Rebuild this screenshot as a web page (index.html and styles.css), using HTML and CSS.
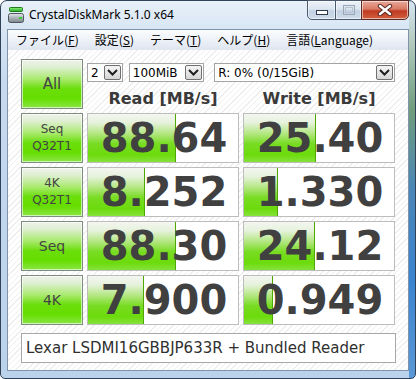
FILE: index.html
```html
<!DOCTYPE html>
<html>
<head>
<meta charset="utf-8">
<link rel="stylesheet" href="styles.css">
</head>
<body>
<div class="window">
  <div class="titlebar">
    <svg class="appicon" width="16" height="17" viewBox="0 0 16 17">
      <defs>
        <linearGradient id="gb" x1="0" y1="0" x2="0" y2="1">
          <stop offset="0" stop-color="#8ff07a"/>
          <stop offset="1" stop-color="#22a822"/>
        </linearGradient>
        <linearGradient id="gd" x1="0" y1="0" x2="0" y2="1">
          <stop offset="0" stop-color="#e4e8ea"/>
          <stop offset="0.5" stop-color="#a9b1b6"/>
          <stop offset="1" stop-color="#7c868c"/>
        </linearGradient>
      </defs>
      <rect x="1.5" y="0.5" width="13" height="4" rx="1" fill="url(#gb)" stroke="#1c7c1c"/>
      <rect x="0.5" y="6.5" width="15" height="9" rx="2" fill="url(#gd)" stroke="#4c565c"/>
      <rect x="11" y="10" width="3" height="2" fill="#34d034"/>
    </svg>
    <span class="title">CrystalDiskMark 5.1.0 x64</span>
    <div class="caption">
      <div class="cbtn min">
        <svg width="12" height="6" viewBox="0 0 12 6"><rect x="0.5" y="0.5" width="11" height="4" fill="#fff" stroke="#2c3a4c"/></svg>
      </div>
      <div class="cbtn max">
        <svg width="12" height="10" viewBox="0 0 12 10"><rect x="0.5" y="0.5" width="11" height="9" fill="none" stroke="#9aa6b4"/><rect x="2.5" y="2.5" width="7" height="5" fill="none" stroke="#b8c2ce"/></svg>
      </div>
      <div class="cbtn close">
        <svg width="16" height="12" viewBox="0 0 16 12">
          <path d="M3 2 L13 10 M13 2 L3 10" stroke="#5a2a22" stroke-width="4.4" stroke-linecap="round"/>
          <path d="M3 2 L13 10 M13 2 L3 10" stroke="#ffffff" stroke-width="2.4" stroke-linecap="round"/>
        </svg>
      </div>
    </div>
  </div>
  <div class="client">
    <div class="menubar">
      <span class="mi">ファイル(<u>F</u>)</span>
      <span class="mi">設定(<u>S</u>)</span>
      <span class="mi">テーマ(<u>T</u>)</span>
      <span class="mi">ヘルプ(<u>H</u>)</span>
      <span class="mi">言語(<u>L</u>anguage)</span>
    </div>
    <div class="content">
      <div class="grid">
        <div class="btn lbl-all">All</div>
        <div class="hdr">
          <div class="combos">
            <div class="combo c-count"><span class="val">2</span><span class="arrow"><svg width="11" height="7" viewBox="0 0 11 7"><path d="M1 1 L5.5 5.5 L10 1" fill="none" stroke="#1e1e1e" stroke-width="2"/></svg></span></div>
            <div class="combo c-size"><span class="val">100MiB</span><span class="arrow"><svg width="11" height="7" viewBox="0 0 11 7"><path d="M1 1 L5.5 5.5 L10 1" fill="none" stroke="#1e1e1e" stroke-width="2"/></svg></span></div>
            <div class="combo c-drive"><span class="val">R: 0% (0/15GiB)</span><span class="arrow"><svg width="11" height="7" viewBox="0 0 11 7"><path d="M1 1 L5.5 5.5 L10 1" fill="none" stroke="#1e1e1e" stroke-width="2"/></svg></span></div>
          </div>
          <div class="heads">
            <div class="head">Read [MB/s]</div>
            <div class="head">Write [MB/s]</div>
          </div>
        </div>

        <div class="btn lbl-two">Seq<br>Q32T1</div>
        <div class="cell"><span class="bar" style="width:88px"></span><span class="num">88.64</span></div>
        <div class="cell"><span class="bar" style="width:72px"></span><span class="num">25.40</span></div>

        <div class="btn lbl-two">4K<br>Q32T1</div>
        <div class="cell"><span class="bar" style="width:57px"></span><span class="num">8.252</span></div>
        <div class="cell"><span class="bar" style="width:34px"></span><span class="num">1.330</span></div>

        <div class="btn lbl-one">Seq</div>
        <div class="cell"><span class="bar" style="width:88px"></span><span class="num">88.30</span></div>
        <div class="cell"><span class="bar" style="width:71px"></span><span class="num">24.12</span></div>

        <div class="btn lbl-one">4K</div>
        <div class="cell"><span class="bar" style="width:56px"></span><span class="num">7.900</span></div>
        <div class="cell"><span class="bar" style="width:29px"></span><span class="num">0.949</span></div>
      </div>
      <div class="footer">Lexar LSDMI16GBBJP633R + Bundled Reader</div>
    </div>
  </div>
</div>
</body>
</html>
```
FILE: styles.css
```css
html, body {
  margin: 0;
  padding: 0;
}
body {
  width: 416px;
  height: 379px;
  overflow: hidden;
  background: #ffffff;
  font-family: "DejaVu Sans", sans-serif;
}
.window {
  box-sizing: border-box;
  width: 416px;
  height: 379px;
  border: 1px solid #2f4257;
  border-radius: 7px 7px 5px 5px;
  padding: 0 6px 7px 6px;
  display: flex;
  flex-direction: column;
  background:
    linear-gradient(180deg, #d6e4f0 0px, #b4ccc0 40px, #6e9c7c 110px, #4a86b8 190px, #3b84d0 280px, #5c98d6 379px) right top / 6px 100% no-repeat,
    linear-gradient(180deg, #e8f0f9 0px, #d8e6f4 28px, #c6daef 80px, #bad2eb 379px);
}
.titlebar {
  height: 28px;
  display: flex;
  align-items: flex-start;
  flex: none;
}
.appicon {
  margin-top: 6px;
  margin-left: 1px;
  flex: none;
}
.title {
  margin-left: 5px;
  margin-top: 6px;
  font-family: "Noto Sans", sans-serif;
  font-size: 12px;
  line-height: 16px;
  color: #000;
}
.caption {
  margin-left: auto;
  margin-top: -1px;
  display: flex;
}
.cbtn {
  box-sizing: border-box;
  height: 20px;
  border: 1px solid #4a5b70;
  display: flex;
  align-items: center;
  justify-content: center;
  box-shadow: inset 0 0 0 1px rgba(255,255,255,0.55);
}
.cbtn.min {
  width: 29px;
  border-radius: 0 0 0 5px;
  background: linear-gradient(180deg, #eef3f9 0%, #dbe5f0 45%, #c2d1e3 55%, #cfdbe9 100%);
  padding-top: 5px;
}
.cbtn.max {
  width: 27px;
  margin-left: -1px;
  background: linear-gradient(180deg, #eef3f9 0%, #dbe5f0 45%, #c2d1e3 55%, #cfdbe9 100%);
}
.cbtn.close {
  width: 48px;
  margin-left: -1px;
  border-color: #5c2a24;
  border-radius: 0 0 5px 0;
  background: linear-gradient(180deg, #e9a99a 0%, #d87a64 45%, #c03a22 55%, #d0603e 100%);
}
.client {
  flex: 1;
  border: 1px solid #8093a8;
  display: flex;
  flex-direction: column;
  background: #fff;
}
.menubar {
  height: 20px;
  box-sizing: border-box;
  display: flex;
  align-items: center;
  background: linear-gradient(180deg, #fbfcfe 0%, #eef2f8 50%, #dfe6f1 100%);
  border-bottom: 1px solid #e2e6ec;
  font-family: "Noto Sans CJK JP", sans-serif;
  font-size: 12px;
  color: #000;
}
.mi {
  padding: 0 8px;
  line-height: 18px;
  white-space: nowrap;
}
.mi u {
  text-decoration: underline;
  text-underline-offset: 1px;
}
.content {
  flex: 1;
  padding: 9px 12px 7px 13px;
  background:
    repeating-linear-gradient(135deg, #ffffff 0px, #ffffff 3px, #eeeeee 3px, #eeeeee 4px);
}
.grid {
  display: grid;
  grid-template-columns: 62px 152px 152px;
  grid-auto-rows: 50px;
  gap: 4px;
}
.btn {
  box-sizing: border-box;
  border: 1px solid #7f8c80;
  background: linear-gradient(180deg, #eef2ea 0%, #e0efd4 14%, #a8ea6c 40%, #6ade0a 60%, #66dd00 80%, #8ae646 100%);
  box-shadow: inset 0 0 0 1px rgba(255,255,255,0.6);
  display: flex;
  align-items: center;
  justify-content: center;
  text-align: center;
  color: #444444;
}
.lbl-all {
  font-size: 15px;
}
.lbl-two {
  font-size: 12px;
  line-height: 17px;
}
.lbl-one {
  font-size: 14px;
}
.hdr {
  grid-column: 2 / 4;
  display: flex;
  flex-direction: column;
}
.combos {
  margin-top: 4px;
  display: flex;
  height: 19px;
}
.combo {
  box-sizing: border-box;
  height: 19px;
  border: 1px solid #a4a4a4;
  background: #fff;
  display: flex;
  align-items: center;
  justify-content: space-between;
  padding: 0 1px 0 3px;
  font-size: 12px;
  color: #000;
}
.c-count { width: 36px; }
.c-size { width: 76px; margin-left: 6px; }
.c-drive { width: 182px; margin-left: 10px; }
.arrow {
  box-sizing: border-box;
  width: 17px;
  height: 15px;
  border: 1px solid #707070;
  border-radius: 2px;
  background: linear-gradient(180deg, #f4f4f4 0%, #e6e6e6 50%, #d4d4d4 100%);
  display: flex;
  align-items: center;
  justify-content: center;
}
.heads {
  margin-top: 7px;
  display: grid;
  grid-template-columns: 152px 152px;
  gap: 4px;
}
.head {
  text-align: center;
  font-weight: bold;
  font-size: 16px;
  line-height: 19px;
  color: #3a3a3a;
}
.cell {
  position: relative;
  box-sizing: border-box;
  border: 1px solid #bdbdbd;
  background: #fff;
  display: flex;
  align-items: center;
  justify-content: center;
  overflow: hidden;
}
.bar {
  position: absolute;
  left: 0;
  top: 0;
  bottom: 0;
  box-sizing: border-box;
  border-right: 1px solid #4fa800;
  background: linear-gradient(180deg, #f4f6f1 0%, #e6f2dc 18%, #b0e67c 42%, #78dc22 62%, #6cdb0c 85%, #86e23c 100%);
}
.num {
  position: relative;
  font-weight: bold;
  font-size: 40px;
  line-height: 40px;
  color: #404040;
  margin-left: 2px;
}
.footer {
  margin-top: 8px;
  box-sizing: border-box;
  height: 30px;
  border: 1px solid #a8a8a8;
  background: #fff;
  display: flex;
  align-items: center;
  padding-left: 4px;
  font-size: 15px;
  color: #303030;
}
```
